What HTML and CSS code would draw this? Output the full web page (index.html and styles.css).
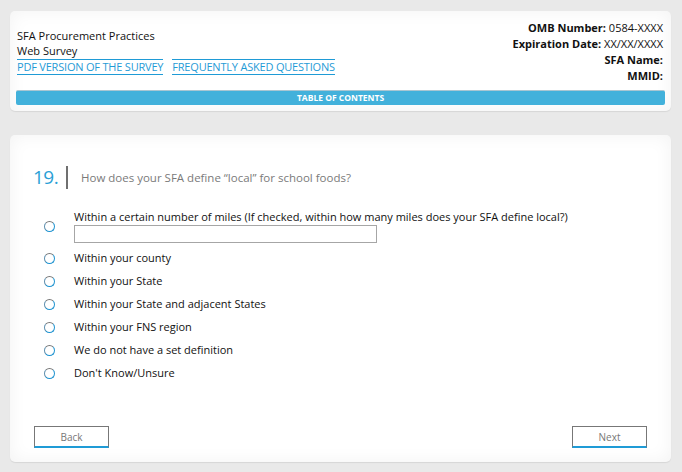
FILE: index.html
```html
<!DOCTYPE html>
<html>
<head>
<meta charset="utf-8">
<link rel="stylesheet" href="styles.css">
</head>
<body>
<div class="page">
  <header class="card head">
    <div class="head-top">
      <div class="title-block">
        <div class="title">SFA Procurement Practices</div>
        <div class="title">Web Survey</div>
        <div class="links">
          <a class="link" href="#">PDF VERSION OF THE SURVEY</a>
          <a class="link" href="#">FREQUENTLY ASKED QUESTIONS</a>
        </div>
      </div>
      <div class="meta">
        <div><b>OMB Number:</b> 0584-XXXX</div>
        <div><b>Expiration Date:</b> XX/XX/XXXX</div>
        <div><b>SFA Name:</b></div>
        <div><b>MMID:</b></div>
      </div>
    </div>
    <div class="toc">TABLE OF CONTENTS</div>
  </header>

  <main class="card survey">
    <div class="question">
      <span class="qnum">19.</span>
      <span class="qbar"></span>
      <span class="qtext">How does your SFA define “local” for school foods?</span>
    </div>
    <div class="options">
      <div class="option first">
        <span class="radio"></span>
        <div class="opt-body">
          <div class="label">Within a certain number of miles (If checked, within how many miles does your SFA define local?)</div>
          <input class="miles" type="text">
        </div>
      </div>
      <div class="option"><span class="radio"></span><div class="label">Within your county</div></div>
      <div class="option"><span class="radio"></span><div class="label">Within your State</div></div>
      <div class="option"><span class="radio"></span><div class="label">Within your State and adjacent States</div></div>
      <div class="option"><span class="radio"></span><div class="label">Within your FNS region</div></div>
      <div class="option"><span class="radio"></span><div class="label">We do not have a set definition</div></div>
      <div class="option"><span class="radio"></span><div class="label">Don't Know/Unsure</div></div>
    </div>
    <div class="nav">
      <button class="btn">Back</button>
      <button class="btn">Next</button>
    </div>
  </main>
</div>
</body>
</html>
```
FILE: styles.css
```css
* { box-sizing: border-box; }
html, body { margin: 0; padding: 0; }
body {
  background: #e9e9e9;
  font-family: "Open Sans", "Noto Sans", sans-serif;
  font-size: 11px;
  color: #111;
}
.page {
  padding: 11px 11px 10px 10px;
  display: flex;
  flex-direction: column;
  gap: 24px;
}
.card {
  background: #fff;
  border-radius: 5px;
  box-shadow: inset 0 0 18px rgba(0,0,0,0.05), 0 1px 1px rgba(0,0,0,0.08);
}
.head {
  height: 100px;
  padding: 5px 6px 6px 6px;
  display: flex;
  flex-direction: column;
}
.head-top {
  flex: 1;
  display: flex;
  justify-content: space-between;
  align-items: center;
  padding: 0 2px 3px 1px;
}
.title { line-height: 15px; }
.links { display: flex; gap: 9px; margin-top: 1px; }
.link {
  color: #1f9bd6;
  text-decoration: none;
  border-top: 1px solid #1f9bd6;
  border-bottom: 1px solid #1f9bd6;
  line-height: 14px;
  letter-spacing: -0.2px;
  padding: 0;
}
.meta {
  text-align: right;
  line-height: 16px;
}
.meta b { font-weight: 700; }
.toc {
  height: 15px;
  background: #42b1db;
  border-top: 1px solid #a9c6d2;
  border-radius: 2px;
  color: #fff;
  font-weight: 700;
  font-size: 8.5px;
  line-height: 13px;
  text-align: center;
}
.survey {
  height: 327px;
  padding: 30px 24px 14px 24px;
  display: flex;
  flex-direction: column;
}
.question {
  display: flex;
  align-items: center;
  height: 24px;
}
.qnum {
  color: #2a9fd6;
  font-size: 19px;
  width: 33px;
  margin-left: -1px;
  letter-spacing: -0.5px;
}
.qbar {
  width: 2px;
  height: 23px;
  background: #707070;
  margin-right: 13px;
}
.qtext { color: #7a7a7a; font-size: 11.5px; }
.options {
  margin-top: 20px;
  display: flex;
  flex-direction: column;
  gap: 7px;
}
.option {
  display: flex;
  align-items: center;
  min-height: 16px;
}
.radio {
  width: 11px;
  height: 11px;
  border-radius: 50%;
  border: 1.6px solid #1f93d0;
  border-top-color: #777;
  border-left-color: #5f8fae;
  margin-left: 10px;
  margin-right: 19px;
  flex: none;
}
.label { line-height: 16px; }
.miles {
  display: block;
  width: 303px;
  height: 18px;
  border: 1px solid #a6a6a6;
  margin: 0;
  padding: 0;
}
.nav {
  margin-top: auto;
  display: flex;
  justify-content: space-between;
}
.btn {
  width: 75px;
  height: 22px;
  background: #fff;
  border: 1px solid #777;
  border-bottom: 2px solid #1f9bd6;
  color: #777;
  font-family: inherit;
  font-size: 10px;
  padding: 0;
}
```
